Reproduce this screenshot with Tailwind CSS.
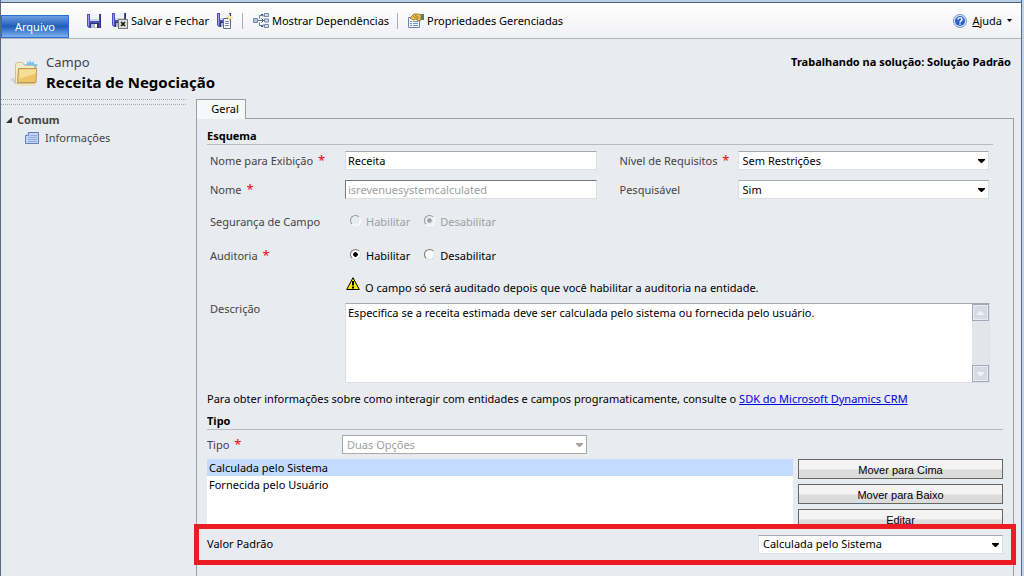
<!DOCTYPE html>
<html lang="pt-BR">

<head>
    <meta charset="UTF-8">
    <meta name="viewport" content="width=device-width, initial-scale=1.0">
    <title>Campo: Receita de Negociação</title>
    <script src="https://cdn.jsdelivr.net/npm/@tailwindcss/browser@4"></script>
</head>

<body class="bg-[#bcd4ec] text-black font-['Noto_Sans','Open_Sans',sans-serif] text-[11px] leading-4">

    <!-- shared symbols -->
    <svg class="hidden">
        <symbol id="disk" viewBox="0 0 14 14">
            <path d="M0 0h14v14H2L0 12z" fill="#4d4fc0" />
            <path d="M1 1h1v11H1z" fill="#9a9bea" />
            <path d="M13 0h1v14h-1z" fill="#2d2d80" />
            <path d="M3 0h9v7H3z" fill="#eef3fc" />
            <path d="M3 5h9v2H3z" fill="#c9d6ee" />
            <path d="M3 9h9v5H3z" fill="#34346c" />
            <path d="M4 10h6v4H4z" fill="#aebccb" />
            <path d="M8 10h2v3H8z" fill="#fff" />
        </symbol>
        <symbol id="arrow" viewBox="0 0 7 4">
            <path d="M0 0h7v1L4 4H3L0 1z" fill="currentColor" />
        </symbol>
    </svg>

    <div class="min-h-screen mr-[2px] border-x border-[#5a6b80] bg-[#e8ebf0] flex flex-col">
        <div class="h-[3px] border-b border-[#4e6078] bg-[#b9cfe8]"></div>

        <!-- toolbar -->
        <nav class="h-9 flex items-center border-b border-[#b1b5bb] bg-linear-to-b from-white to-[#f0f1f4]">
            <button class="self-end h-[23px] w-[68px] border border-[#2a70cf] bg-linear-to-b from-[#6d9fe0] via-[#1f5db8] to-[#7fb2ee] text-white">Arquivo</button>
            <button class="ml-[18px]" aria-label="Salvar"><svg class="size-[14px]"><use href="#disk" /></svg></button>
            <button class="ml-[11px] flex items-center gap-[3px]">
                <svg class="size-4" viewBox="0 0 16 16">
                    <use href="#disk" width="14" height="14" />
                    <rect x="6.500" y="6.500" width="9" height="9" fill="#dcdcd8" stroke="#777" />
                    <path d="M9 9l4 4M13 9l-4 4" stroke="#111" stroke-width="1.500" />
                </svg>
                Salvar e Fechar
            </button>
            <button class="ml-2" aria-label="Salvar e Novo">
                <svg class="size-4" viewBox="0 0 16 16">
                    <use href="#disk" width="14" height="14" />
                    <path d="M6.500 5.500h7v10h-7z" fill="#fff" stroke="#5a6f90" />
                    <path d="M8 8.500h4M8 10.500h4M8 12.500h4" stroke="#7089b5" />
                    <path d="M12.500 1v7M9 4.500h7M10.500 2.500l4 4M14.500 2.500l-4 4" stroke="#ecd070" />
                    <path d="M11.500 3.500h2v2h-2z" fill="#fffbe0" />
                </svg>
            </button>
            <span class="ml-[9px] w-px h-4 bg-[#a9adb5]"></span>
            <button class="ml-[10px] flex items-center gap-[3px]">
                <svg class="size-4" viewBox="0 0 16 16" fill="none" stroke="#7488a6">
                    <path d="M.5 5.500h4v4h-4z" fill="#b5c7df" />
                    <path d="M5 7.500h5M6.500 5.500v-3h3M6.500 9.500v3h3" stroke="#66768f" />
                    <path d="M8.500 5.500l2 2-2 2M8 1.500h2v2M8 13.500h2v-2" stroke="#3f4f68" />
                    <path d="M11.500.5h4v3h-4zM11.500 6h4v3h-4zM11.500 11.500h4v3h-4z" fill="#d3dfef" />
                </svg>
                Mostrar Dependências
            </button>
            <span class="ml-2 w-px h-4 bg-[#a9adb5]"></span>
            <button class="ml-[10px] flex items-center gap-[3px]">
                <svg class="size-4" viewBox="0 0 16 16">
                    <path d="M.5 4.500h11v10H.5z" fill="#f4f8fd" stroke="#6b87ad" />
                    <path d="M2 8.500h2M5 8.500h5M2 10.500h2M5 10.500h5M2 12.500h2M5 12.500h5" stroke="#6f94c8" />
                    <path d="M2 5l4-4h5l2 1v5l-3 1-2-2-3 1z" fill="#edc24e" stroke="#8a6a20" stroke-width=".8" />
                    <path d="M5 3l5 3M7 2l4 3" stroke="#8a6a20" stroke-width=".8" />
                    <path d="M13 1h3v6h-3z" fill="#4d8a5c" />
                </svg>
                Propriedades Gerenciadas
            </button>
            <button class="ml-auto mr-[9px] flex items-center gap-[5px]">
                <svg class="size-[14px]" viewBox="0 0 14 14">
                    <circle cx="7" cy="7" r="6.500" fill="#dfe9f8" stroke="#6f93cd" />
                    <circle cx="7" cy="7" r="5" fill="#2c60cc" />
                    <path d="M5 5.500c0-2.500 4-2.500 4 0 0 1.500-2 1.300-2 3M7 9.500v1.300" fill="none" stroke="#fff" stroke-width="1.400" />
                </svg>
                <span><u>A</u>juda</span>
                <svg class="w-[5px] h-[3px]" viewBox="0 0 5 3"><path d="M0 0h5L2.500 3z" /></svg>
            </button>
        </nav>

        <!-- record header -->
        <header class="flex justify-between pt-[15px] pl-[9px] pr-[10px] h-[60px]">
            <div class="flex gap-2">
                <svg class="w-7 h-7 mt-[6px]" viewBox="0 0 28 28">
                    <path d="M0 19l5-1v6z" fill="#cfd2d6" />
                    <path d="M20 0l1.500 3L24 1v3l4 .5-2 2.500 1 3H16l-1-3-2-2 4-1V1l2 2z" fill="#74c2f0" />
                    <path d="M5.500 4.500l1-2h6l2 3h10v18h-19z" fill="#f7ebc6" stroke="#cdbf98" />
                    <path d="M19 5l1-2 1.500 1L23 3l.5 2.500z" fill="#74c2f0" />
                    <path d="M8.500 8.500h18l-.5 14H7.500z" fill="#eec465" stroke="#b99a58" />
                    <path d="M9.500 9.500H26v4L9 19z" fill="#f8dd94" />
                    <path d="M7 24h19v2H7z" fill="#f3e3bd" />
                </svg>
                <div>
                    <p class="text-[13px] leading-4 text-[#444]">Campo</p>
                    <h1 class="text-[15px] leading-6 font-bold">Receita de Negociação</h1>
                </div>
            </div>
            <p class="font-bold">Trabalhando na solução: Solução Padrão</p>
        </header>

        <div class="flex-1 flex">
            <!-- side navigation -->
            <aside class="w-[185px] shrink-0 text-[#444]">
                <div class="h-[6px] border-y border-dotted border-[#a5a9b0]"></div>
                <h2 class="flex items-center gap-[5px] mt-[7px] ml-[5px] font-bold">
                    <svg class="size-[6px]" viewBox="0 0 6 6"><path d="M6 0v6H0z" fill="#333" /></svg>
                    Comum
                </h2>
                <a href="#" class="flex items-center gap-[6px] mt-[2px] ml-6">
                    <svg class="w-[14px] h-3" viewBox="0 0 14 12">
                        <path d="M3.500.5h10v11H.5v-8z" fill="#c2d3f5" stroke="#6480bd" />
                        <path d="M.5 3.500h3v-3" fill="#fff" stroke="#6480bd" />
                        <path d="M5 3.500h7M3 5.500h9M3 7.500h9M3 9.500h9" stroke="#92abdb" />
                    </svg>
                    Informações
                </a>
            </aside>

            <main class="flex-1 flex flex-col ml-[10px] mr-[7px]">
                <div class="h-[19px]">
                    <button class="relative w-[50px] h-5 pb-[2px] pl-2 border border-b-0 border-[#9a9ea8] bg-[#f6f8fa]">Geral</button>
                </div>
                <div class="flex-1 border border-b-0 border-[#9a9ea8] px-[10px] pt-[9px]">
                    <section class="mr-[10px]">
                        <h3 class="font-bold h-[17px] border-b border-[#b9bbc0]">Esquema</h3>
                        <div class="grid grid-cols-[135px_1fr_141px_1fr] items-center pl-[3px] pr-1 pt-[6px] gap-y-[10px] text-[#444]">
                            <label for="display">Nome para Exibição <span class="ml-[2px] text-[13px] leading-3 text-red-600">*</span></label>
                            <input id="display" class="h-[19px] w-full px-[2px] border border-[#dcdfe4] border-t-[#a5a9b0] bg-white text-black" value="Receita">
                            <label for="level" class="pl-[23px]">Nível de Requisitos <span class="ml-[2px] text-[13px] leading-3 text-red-600">*</span></label>
                            <div class="relative">
                                <select id="level" class="block appearance-none h-[19px] w-full px-1 border border-[#dcdfe4] border-t-[#a5a9b0] bg-white text-black"><option>Sem Restrições</option></select>
                                <svg class="absolute right-1 top-2 w-[7px] h-1 text-black pointer-events-none"><use href="#arrow" /></svg>
                            </div>
                            <label for="name">Nome <span class="ml-[2px] text-[13px] leading-3 text-red-600">*</span></label>
                            <input id="name" class="h-[19px] w-full px-[2px] border border-[#dcdfe4] border-t-[#777] border-l-[#777] bg-white text-[#a0a0a0]" value="isrevenuesystemcalculated" disabled>
                            <label for="search" class="pl-[23px]">Pesquisável</label>
                            <div class="relative">
                                <select id="search" class="block appearance-none h-[19px] w-full px-1 border border-[#dcdfe4] border-t-[#a5a9b0] bg-white text-black"><option>Sim</option></select>
                                <svg class="absolute right-1 top-2 w-[7px] h-1 text-black pointer-events-none"><use href="#arrow" /></svg>
                            </div>
                        </div>
                        <div class="grid grid-cols-[135px_1fr] pl-[3px] pt-[15px] text-[#444]">
                            <span>Segurança de Campo</span>
                            <div class="flex gap-[14px] pl-[5px] text-[#a0a0a0]">
                                <label class="flex gap-[5px]"><input type="radio" name="security" class="appearance-none size-[11px] mt-px rounded-full border border-white border-t-[#999] border-l-[#999]" disabled>Habilitar</label>
                                <label class="flex gap-[5px]"><input type="radio" name="security" class="appearance-none size-[11px] mt-px rounded-full border border-white border-t-[#999] border-l-[#999] bg-radial from-[#a0a0a0] from-30% to-[#e8ebf0] to-40%" disabled checked>Desabilitar</label>
                            </div>
                            <span class="mt-[18px]">Auditoria <span class="ml-[2px] text-[13px] leading-3 text-red-600">*</span></span>
                            <div class="flex gap-[14px] pl-[5px] mt-[18px] text-black">
                                <label class="flex gap-[5px]"><input type="radio" name="audit" class="appearance-none size-[11px] mt-px rounded-full border border-[#ddd] border-t-[#777] border-l-[#777] bg-white checked:bg-radial from-black from-30% to-white to-40%" checked>Habilitar</label>
                                <label class="flex gap-[5px]"><input type="radio" name="audit" class="appearance-none size-[11px] mt-px rounded-full border border-[#ddd] border-t-[#777] border-l-[#777] bg-white checked:bg-radial from-black from-30% to-white to-40%">Desabilitar</label>
                            </div>
                            <p class="col-start-2 flex gap-[5px] mt-[13px] pt-[3px] pl-px text-black">
                                <svg class="w-[14px] h-[13px] -mt-[3px]" viewBox="0 0 14 13">
                                    <path d="M7 .7L13.300 12.500H.7z" fill="#ffe800" stroke="#000" />
                                    <path d="M6 4h2v4.500H6zM6 9.500h2v2H6z" />
                                </svg>
                                O campo só será auditado depois que você habilitar a auditoria na entidade.
                            </p>
                            <label for="description" class="mt-[5px]">Descrição</label>
                            <div class="flex mt-[7px] mr-[3px] h-20 border border-[#dcdfe4] border-t-[#a5a9b0] text-black">
                                <textarea id="description" class="flex-1 resize-none overflow-hidden bg-white px-[2px] py-px">Especifica se a receita estimada deve ser calculada pelo sistema ou fornecida pelo usuário.</textarea>
                                <div class="w-[17px] flex flex-col justify-between bg-[#e2e6ea] text-[#f0f2f6]">
                                    <button class="size-[17px] border border-[#a3a8b8] bg-[#d6dae3] p-1 inset-ring inset-ring-[#e8ebf2]" aria-label="Rolar para cima"><svg class="w-[7px] h-1 rotate-180"><use href="#arrow" /></svg></button>
                                    <button class="size-[17px] border border-[#a3a8b8] bg-[#d6dae3] p-1 inset-ring inset-ring-[#e8ebf2]" aria-label="Rolar para baixo"><svg class="w-[7px] h-1"><use href="#arrow" /></svg></button>
                                </div>
                            </div>
                        </div>
                    </section>
                    <p class="mt-2">Para obter informações sobre como interagir com entidades e campos programaticamente, consulte o <a href="#" class="text-[#0000e0] underline">SDK do Microsoft Dynamics CRM</a></p>

                    <section>
                        <h3 class="mt-[6px] font-bold h-[17px] border-b border-[#b9bbc0]">Tipo</h3>
                        <div class="flex items-center mt-[5px] text-[#444]">
                            <label for="type" class="w-[135px]">Tipo <span class="ml-[2px] text-[13px] leading-3 text-red-600">*</span></label>
                            <div class="relative w-[245px] text-[#a0a0a0]">
                                <select id="type" class="block appearance-none h-[19px] w-full px-1 border border-[#a9a9a9] bg-white" disabled><option>Duas Opções</option></select>
                                <svg class="absolute right-1 top-2 w-[7px] h-1 pointer-events-none"><use href="#arrow" /></svg>
                            </div>
                        </div>
                        <div class="flex gap-[5px] mt-[5px] h-[65px]">
                            <ul class="flex-1 bg-white">
                                <li class="h-[17px] pt-px px-[2px] bg-[#c3dbff]">Calculada pelo Sistema</li>
                                <li class="h-[17px] pt-px px-[2px]">Fornecida pelo Usuário</li>
                            </ul>
                            <div class="w-[205px] flex flex-col gap-[5px] font-['Liberation_Sans',sans-serif]">
                                <button class="h-5 pt-[2px] shrink-0 border border-[#666] bg-linear-to-b from-[#f4f4f4] from-50% to-[#dcdcdc] to-55%">Mover para Cima</button>
                                <button class="h-5 pt-[2px] shrink-0 border border-[#666] bg-linear-to-b from-[#f4f4f4] from-50% to-[#dcdcdc] to-55%">Mover para Baixo</button>
                                <button class="h-5 pt-[2px] shrink-0 border border-[#666] bg-linear-to-b from-[#f4f4f4] from-50% to-[#dcdcdc] to-55%">Editar</button>
                            </div>
                        </div>
                        <!-- highlighted row, sits over the end of the button column -->
                        <div class="relative flex items-center justify-between -mx-[13px] h-[41px] border-5 border-[#ed1c24] bg-[#e8ebf0] px-2 pb-px">
                            <label for="default">Valor Padrão</label>
                            <div class="relative w-[245px]">
                                <select id="default" class="block appearance-none h-[19px] w-full px-1 border border-[#dcdfe4] border-t-[#a5a9b0] bg-white"><option>Calculada pelo Sistema</option></select>
                                <svg class="absolute right-1 top-2 w-[7px] h-1 pointer-events-none"><use href="#arrow" /></svg>
                            </div>
                        </div>
                    </section>
                </div>
            </main>
        </div>
    </div>

</body>

</html>
